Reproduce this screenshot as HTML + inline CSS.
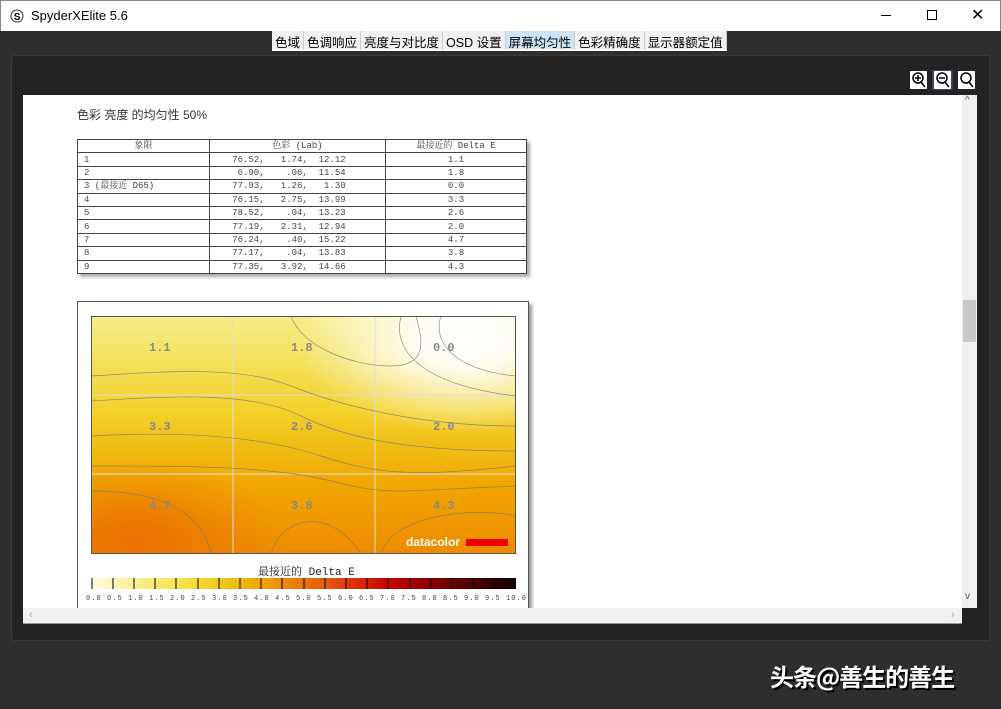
<!DOCTYPE html>
<html><head><meta charset="utf-8"><style>
*{margin:0;padding:0;box-sizing:border-box}
body{width:1001px;height:709px;background:#2e2e2e;position:relative;overflow:hidden;font-family:"Liberation Sans","Noto Sans CJK SC",sans-serif}
.abs{position:absolute}
#title{left:0;top:0;width:1001px;height:31px;background:#fff;border:1px solid #888;border-bottom:none}
#title .t{left:30px;top:7px;font-size:13px;color:#000}
#tabs{left:272px;top:31px;height:20px;display:flex;background:#fff}
#tabs div{font-size:12.5px;padding:1px 3px;border-right:1px solid #ccc;background:#f0f0f0;color:#000;height:20px;border-bottom:2px solid #fff}
#panel{left:11px;top:55px;width:979px;height:586px;background:#232323;border:1px solid #3a3a3a;border-radius:3px}
#doc{left:23px;top:95px;width:939px;height:513px;background:#fff;overflow:hidden}
table{border-collapse:collapse;font-family:"Liberation Mono","Noto Serif CJK SC",monospace;font-size:9px;color:#444}
td{border:1px solid #444;height:13.4px;padding:0 6px;line-height:12px;white-space:pre}
.c{text-align:center}
</style></head><body>
<div id="title" class="abs">
 <svg class="abs" style="left:9px;top:8px" width="14" height="14"><circle cx="7" cy="7" r="6" fill="none" stroke="#333"/><text x="3.8" y="11" font-size="10" font-family="Liberation Sans" font-weight="bold">S</text></svg>
 <div class="abs t">SpyderXElite 5.6</div>
 <div class="abs" style="left:880px;top:14px;width:10px;height:1px;background:#000"></div>
 <div class="abs" style="left:926px;top:9px;width:10px;height:10px;border:1px solid #000"></div>
 <div class="abs" style="left:970px;top:4px;font-size:16px">✕</div>
</div>
<div id="tabs" class="abs"><div>色域</div><div>色调响应</div><div>亮度与对比度</div><div>OSD 设置</div><div style="background:#cce4f7">屏幕均匀性</div><div>色彩精确度</div><div>显示器额定值</div></div>
<div id="panel" class="abs"></div>
<svg class="abs" style="left:909px;top:70px" width="70" height="20">
 <rect x="1" y="1" width="17" height="18" fill="#fff"/><rect x="24" y="0" width="19" height="20" fill="#2a3a4a" stroke="#557"/><rect x="25" y="1" width="17" height="18" fill="#fff"/><rect x="49" y="1" width="17" height="18" fill="#fff"/>
 <g fill="none" stroke="#000" stroke-width="1.5"><circle cx="9" cy="8" r="5"/><line x1="12" y1="12" x2="16" y2="17"/><circle cx="33" cy="8" r="5"/><line x1="36" y1="12" x2="40" y2="17"/><circle cx="57" cy="8" r="5"/><line x1="60" y1="12" x2="64" y2="17"/><path d="M6 8h6M9 5v6M30 8h6"/></g>
</svg>
<div id="doc" class="abs">
 <div class="abs" style="left:54px;top:11px;font-size:12px;color:#333">色彩 亮度 的均匀性 50%</div>
 <table class="abs" style="left:54px;top:44px;width:450px;box-shadow:3px 3px 3px #aaa">
  <tr><td class="c" style="width:132px">象限</td><td class="c" style="width:176px">色彩 (Lab)</td><td class="c">最接近的 Delta E</td></tr>
  <tr><td>1</td><td>   76.52,   1.74,  12.12</td><td class="c">1.1</td></tr>
  <tr><td>2</td><td>    6.90,    .06,  11.54</td><td class="c">1.8</td></tr>
  <tr><td>3 (最接近 D65)</td><td>   77.93,   1.26,   1.30</td><td class="c">0.0</td></tr>
  <tr><td>4</td><td>   76.15,   2.75,  13.99</td><td class="c">3.3</td></tr>
  <tr><td>5</td><td>   78.52,    .04,  13.23</td><td class="c">2.6</td></tr>
  <tr><td>6</td><td>   77.19,   2.31,  12.94</td><td class="c">2.0</td></tr>
  <tr><td>7</td><td>   76.24,    .40,  15.22</td><td class="c">4.7</td></tr>
  <tr><td>8</td><td>   77.17,    .04,  13.83</td><td class="c">3.8</td></tr>
  <tr><td>9</td><td>   77.35,   3.92,  14.66</td><td class="c">4.3</td></tr>
 </table>
 <div class="abs" style="left:54px;top:206px;width:452px;height:320px;border:1px solid #555;box-shadow:3px 3px 3px #999;background:#fff"></div>
 <svg class="abs" style="left:68px;top:221px" width="425" height="238">
  <defs>
   <linearGradient id="v" x1="0" y1="0" x2="0" y2="1"><stop offset="0" stop-color="#f6ee88"/><stop offset=".4" stop-color="#f2d12a"/><stop offset=".7" stop-color="#f0a800"/><stop offset="1" stop-color="#ee8a00"/></linearGradient>
   <radialGradient id="w" cx="0.88" cy="0.1" r="0.4"><stop offset="0" stop-color="#fff"/><stop offset=".3" stop-color="#fff" stop-opacity=".9"/><stop offset="1" stop-color="#fff" stop-opacity="0"/></radialGradient>
   <radialGradient id="o" cx="0.1" cy="0.95" r="0.35"><stop offset="0" stop-color="#ec7000"/><stop offset="1" stop-color="#ec7000" stop-opacity="0"/></radialGradient>
  </defs>
  <rect width="425" height="238" fill="url(#v)"/><rect width="425" height="238" fill="url(#o)"/><rect width="425" height="238" fill="url(#w)"/>
  <g stroke="#ddd" stroke-width="1"><line x1="142" y1="0" x2="142" y2="238"/><line x1="284" y1="0" x2="284" y2="238"/><line x1="0" y1="79" x2="425" y2="79"/><line x1="0" y1="158" x2="425" y2="158"/></g>
  <g fill="none" stroke="#777" stroke-width=".7" opacity=".8">
   <path d="M0 60 C80 55 150 50 200 70 S330 110 425 110"/><path d="M0 85 C80 80 160 75 210 100 S330 135 425 135"/><path d="M0 120 C90 115 170 120 230 140 S330 160 425 150"/><path d="M0 150 C100 150 180 150 240 165 S300 175 425 170"/><path d="M310 0 C300 40 340 70 425 80"/><path d="M350 0 C340 30 370 55 425 60"/><path d="M0 175 C60 175 110 190 120 238"/><path d="M180 238 C190 200 240 190 270 238"/><path d="M290 238 C300 200 380 190 425 200"/><path d="M200 0 C210 30 260 50 300 50 S330 20 325 0"/>
  </g>
  <g font-family="Liberation Mono" font-size="12" fill="#888" font-weight="bold"><text x="58" y="35">1.1</text><text x="200" y="35">1.8</text><text x="342" y="35">0.0</text><text x="58" y="114">3.3</text><text x="200" y="114">2.6</text><text x="342" y="114">2.0</text><text x="58" y="193">4.7</text><text x="200" y="193">3.8</text><text x="342" y="193">4.3</text></g>
  <text x="315" y="230" font-family="Liberation Sans" font-size="12" font-weight="bold" fill="#fff">datacolor</text><rect x="375" y="223" width="42" height="7" fill="#e00"/>
  <rect x="0.5" y="0.5" width="424" height="237" fill="none" stroke="#555"/>
 </svg>
 <div class="abs" style="left:235px;top:468px;font-size:11px;color:#222;font-family:'Liberation Mono','Noto Serif CJK SC',monospace">最接近的 Delta E</div>
 <svg class="abs" style="left:62px;top:482px" width="445" height="26">
  <defs><linearGradient id="s"><stop offset="0" stop-color="#fffbe0"/><stop offset=".25" stop-color="#f3dc2a"/><stop offset=".4" stop-color="#eea500"/><stop offset=".55" stop-color="#e85a10"/><stop offset=".7" stop-color="#c80000"/><stop offset=".85" stop-color="#6a0000"/><stop offset="1" stop-color="#100000"/></linearGradient></defs>
  <g transform="translate(6,0)">
  <rect x="1" y="1" width="424" height="11" fill="url(#s)"/>
  <g stroke="#000"><path d="M1 1v11M22 1v11M43 1v11M64 1v11M85 1v11M107 1v11M128 1v11M149 1v11M170 1v11M191 1v11M213 1v11M234 1v11M255 1v11M276 1v11M297 1v11M319 1v11M340 1v11M361 1v11M382 1v11M403 1v11"/></g>
  </g>
  <text x="1" y="23" font-size="7" fill="#444" font-family="Liberation Mono" textLength="440" lengthAdjust="spacing">0.0 0.5 1.0 1.5 2.0 2.5 3.0 3.5 4.0 4.5 5.0 5.5 6.0 6.5 7.0 7.5 8.0 8.5 9.0 9.5 10.0</text>
 </svg>
</div>
<div class="abs" style="left:962px;top:95px;width:15px;height:513px;background:#f0f0f0"><div class="abs" style="left:1px;top:205px;width:13px;height:42px;background:#c8c8c8"></div><div class="abs" style="left:3px;top:0;font-size:10px;color:#555">^</div><div class="abs" style="left:3px;top:496px;font-size:10px;color:#555">v</div></div>
<div class="abs" style="left:23px;top:608px;width:939px;height:16px;background:#f0f0f0;border-bottom:1px solid #999"><div class="abs" style="left:6px;top:1px;font-size:11px;color:#aaa">‹</div><div class="abs" style="left:928px;top:1px;font-size:11px;color:#aaa">›</div></div>
<div class="abs" style="left:770px;top:658px;font-size:24px;letter-spacing:-1px;color:#fff;font-weight:bold;text-shadow:2px 2px 0 #000;font-family:'Noto Sans CJK SC',sans-serif">头条@善生的善生</div>
</body></html>
